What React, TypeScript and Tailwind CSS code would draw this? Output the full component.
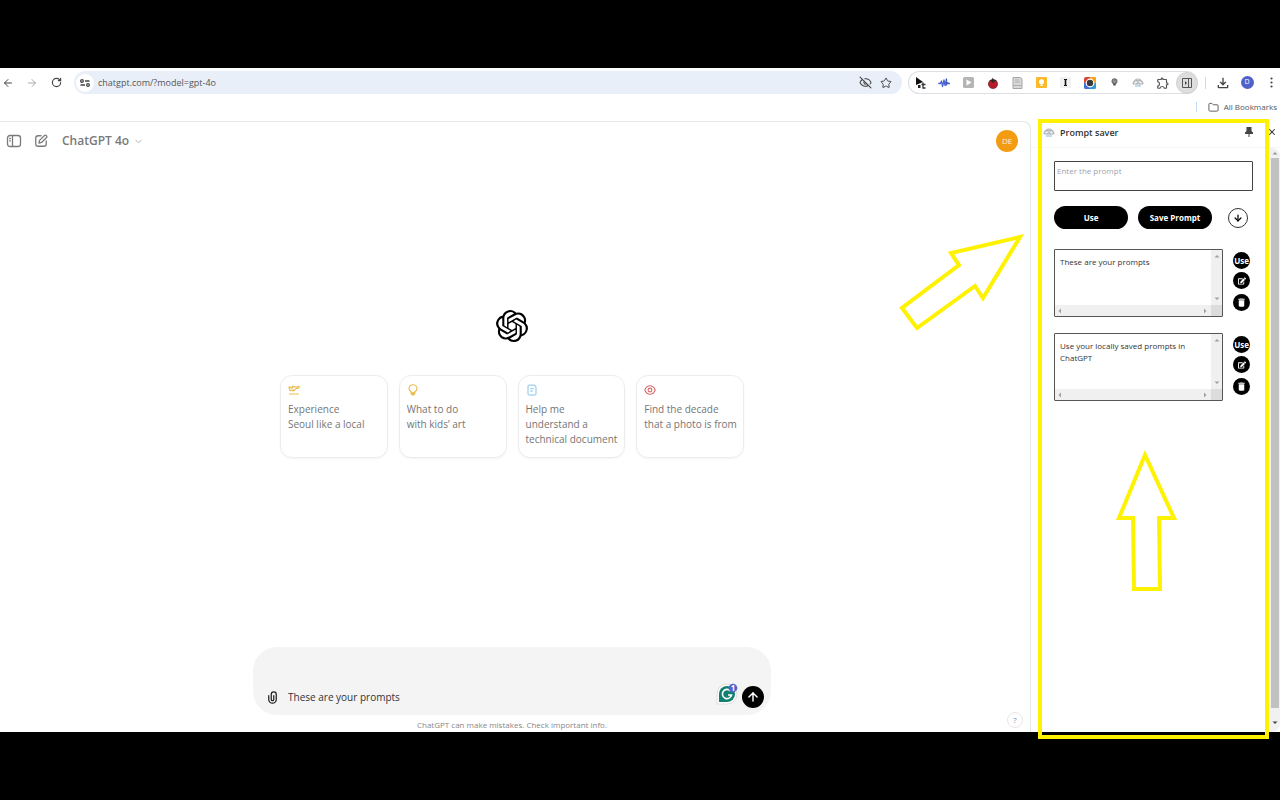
import { useState } from "react";
import type { ReactNode } from "react";
import {
  ArrowDown,
  ArrowLeft,
  ArrowRight,
  ArrowUp,
  ChevronDown,
  EyeOff,
  Folder,
  RotateCw,
  SquarePen,
  Star,
  X,
} from "lucide-react";
import { FaEdit } from "react-icons/fa";
import { MdDelete, MdOutlineExtension, MdOutlineFileDownload } from "react-icons/md";
import { SiOpenai } from "react-icons/si";

const iconButton = "flex w-4 shrink-0 items-center justify-center";
const roundButton =
  "flex size-[17px] items-center justify-center rounded-full bg-black text-[8px] font-bold text-white";

function CloudMark({ size }: { size: number }) {
  return (
    <svg width={size} height={size} viewBox="0 0 24 24" fill="none">
      <path d="M2 14a10 10 0 0 1 20 0z" fill="#f0f2f3" stroke="#989da2" strokeWidth="1.600" />
      <path d="M3 11l5-4 4 4 4-4 5 4M8 7h8M8 14l4-3 4 3" stroke="#989da2" strokeWidth="1.400" />
      <path d="M6 18h12" stroke="#9cc9e6" strokeWidth="2.500" />
    </svg>
  );
}

// Toolbar extension glyphs, in pinned order
const extensions: { name: string; icon: ReactNode }[] = [
  {
    name: "Text flag",
    icon: (
      <svg width="13" height="14" viewBox="0 0 13 14">
        <path d="M2 1l7 5-7 3z" fill="#111" />
        <path d="M4 9h2.500v3H4z" fill="#222" />
        <path d="M9 6.500v5.500h2.500M7.500 8.500h4" fill="none" stroke="#333" strokeWidth="1.300" />
      </svg>
    ),
  },
  {
    name: "Wave",
    icon: (
      <svg width="12" height="12" viewBox="0 0 12 12" fill="none" stroke="#4661cf" strokeWidth="1.300" strokeLinejoin="round" strokeLinecap="round">
        <path d="M.8 6.500h1.500L3.500 4l1 5.500L6 3l1 5.500L8.500 2v6l1-2.500 1 1h1" />
      </svg>
    ),
  },
  {
    name: "Player",
    icon: (
      <svg width="11" height="11" viewBox="0 0 11 11">
        <rect width="11" height="11" rx="1.500" fill="#b5b5b5" />
        <path d="M3.500 2.500l5 3-5 3z" fill="#fff" />
      </svg>
    ),
  },
  {
    name: "Tomato timer",
    icon: (
      <svg width="12" height="12" viewBox="0 0 12 12">
        <circle cx="6" cy="7" r="4.600" fill="#b81c2b" stroke="#5c1a1a" strokeWidth=".6" />
        <path d="M2 3.500L5 3l.5-2.500L7 3l3 .5-2.500 1L6 6 4.500 4.500z" fill="#26301f" />
      </svg>
    ),
  },
  {
    name: "Reader",
    icon: (
      <svg width="11" height="12" viewBox="0 0 11 12">
        <path d="M1 .5h7.500L10 2v9.500H1z" fill="#d8d8d8" stroke="#a5a5a5" />
        <path d="M3 3h4M3 5h5M1 8.500h9" stroke="#b0b0b0" />
      </svg>
    ),
  },
  {
    name: "Keep",
    icon: (
      <svg width="11" height="11" viewBox="0 0 11 11">
        <rect width="11" height="11" rx="1" fill="#fbb92b" />
        <circle cx="5.500" cy="4.700" r="2.500" fill="#fff" />
        <path d="M4.300 7.500h2.400V9H4.300z" fill="#fff" />
      </svg>
    ),
  },
  {
    name: "Instapaper",
    icon: (
      <svg width="11" height="11" viewBox="0 0 11 11">
        <rect width="11" height="11" rx="1" fill="#f1f1f1" />
        <path d="M4 2.500h3M4 8.500h3" stroke="#111" />
        <path d="M5.500 2.500v6" stroke="#111" strokeWidth="1.600" />
      </svg>
    ),
  },
  {
    name: "Lens",
    icon: (
      <svg width="12" height="12" viewBox="0 0 12 12">
        <rect width="12" height="12" rx="2" fill="#dc4437" />
        <path d="M6 0h4a2 2 0 0 1 2 2v4H6z" fill="#f2a51c" />
        <path d="M0 6h6v6H2a2 2 0 0 1-2-2z" fill="#3f6fd8" />
        <path d="M6 6h6v4a2 2 0 0 1-2 2H6z" fill="#2f9ad6" />
        <circle cx="6" cy="6" r="3.800" fill="#3a3a3a" stroke="#fff" strokeWidth="1.200" />
      </svg>
    ),
  },
  {
    name: "Bulb",
    icon: (
      <svg width="7" height="9" viewBox="0 0 7 9">
        <circle cx="3.500" cy="3.300" r="3" fill="#777" />
        <path d="M2 3h3M3.500 3v3" stroke="#aaa" strokeWidth=".8" />
        <path d="M2.300 5.500h2.400v2H2.300z" fill="#444" />
      </svg>
    ),
  },
  { name: "Prompt saver", icon: <CloudMark size={12} /> },
  { name: "Extensions", icon: <MdOutlineExtension size={14} color="#555" /> },
  {
    name: "Side panel",
    icon: (
      <span className="flex size-[22px] shrink-0 items-center justify-center rounded-full border border-[#d0d0d0] bg-[#dedede]">
        <svg width="10" height="10" viewBox="0 0 10 10" fill="none" stroke="#555">
          <path d="M.5.5h9v9h-9zM6.500.5v9" />
          <path d="M3 3l2 2-2 2z" fill="#444" stroke="none" />
        </svg>
      </span>
    ),
  },
];

function Toolbar() {
  const [url, setUrl] = useState("chatgpt.com/?model=gpt-4o");
  return (
    <div className="flex h-[29px] items-center text-[#444]">
      <nav className="flex gap-2">
        <button aria-label="Back" className={iconButton}><ArrowLeft size={12} /></button>
        <button aria-label="Forward" className={`${iconButton} text-[#aaa]`}><ArrowRight size={12} /></button>
        <button aria-label="Reload" className={iconButton}><RotateCw size={11} strokeWidth={2.5} /></button>
      </nav>
      <div className="mr-1.5 ml-2.5 flex h-[23px] flex-1 items-center rounded-full bg-[#e9eff9] pr-2.5 pl-0.5">
        <button aria-label="Site information" className="flex size-[18px] items-center justify-center rounded-full bg-white">
          <svg width="10" height="8" viewBox="0 0 10 8" fill="none" stroke="#444" strokeWidth="1.300">
            <circle cx="2" cy="2" r="1.300" />
            <path d="M5 2h4.500M.5 6H5" />
            <circle cx="8" cy="6" r="1.300" />
          </svg>
        </button>
        <input
          aria-label="Address"
          className="ml-1 min-w-0 flex-1 bg-transparent text-[9px] text-[#555] outline-none"
          value={url}
          onChange={(e) => setUrl(e.target.value)}
        />
        <button aria-label="Tracking blocked" className="mr-2"><EyeOff size={13} /></button>
        <button aria-label="Bookmark this tab"><Star size={12} /></button>
      </div>
      <div className="flex h-[23px] w-[290px] items-center justify-between rounded-full border-y border-l border-[#dcdfe3]">
        {extensions.map((e) => (
          <button key={e.name} aria-label={e.name} className="flex w-[22px] items-center justify-center">
            {e.icon}
          </button>
        ))}
      </div>
      <span className="mr-[9px] ml-[7px] h-3 w-px bg-[#c5dcf5]" />
      <div className="flex items-center gap-2 pr-px">
        <button aria-label="Downloads" className={iconButton}><MdOutlineFileDownload size={16} className="shrink-0" /></button>
        <button aria-label="Profile" className={iconButton}>
          <span className="flex size-[13px] items-center justify-center rounded-full bg-[#4f62cb] text-[7px] text-white">D</span>
        </button>
        <button aria-label="Menu" className={iconButton}>
          <svg width="3" height="11" viewBox="0 0 3 11" fill="#444">
            <circle cx="1.500" cy="1.500" r="1.100" />
            <circle cx="1.500" cy="5.500" r="1.100" />
            <circle cx="1.500" cy="9.500" r="1.100" />
          </svg>
        </button>
      </div>
    </div>
  );
}

const suggestions: { text: string; icon: ReactNode }[] = [
  {
    text: "Experience\nSeoul like a local",
    icon: (
      <svg width="12" height="12" viewBox="0 0 24 24" fill="none" stroke="#eabd4e" strokeWidth="2.400" strokeLinejoin="round" strokeLinecap="round">
        <path d="M2 6l2 0 3 2.500 3-1L8 5l3-.5 5 2 3.500-1.500c3-.8 4 1.500 1.500 2.700L15 10l-2 3-3 1 .5-2.500L7 13c-2 .5-3.500-.5-4-2zM3 20h18" />
      </svg>
    ),
  },
  {
    text: "What to do\nwith kids’ art",
    icon: (
      <svg width="12" height="12" viewBox="0 0 24 24" fill="none" stroke="#eabd4e" strokeWidth="2.400">
        <path d="M8.500 18v-2.500C5.500 14 4 12 4 9.500a8 8 0 0 1 16 0c0 2.500-1.500 4.500-4.500 6V18z" />
        <path d="M7.500 16.500h9V20l-2.500 3h-4l-2.500-3z" fill="#eabd4e" stroke="none" />
      </svg>
    ),
  },
  {
    text: "Help me\nunderstand a\ntechnical document",
    icon: (
      <svg width="12" height="12" viewBox="0 0 24 24" fill="none" stroke="#9fd0ea" strokeWidth="2.500" strokeLinejoin="round">
        <path d="M7 2h9l4 4v13a3 3 0 0 1-3 3H7a3 3 0 0 1-3-3V5a3 3 0 0 1 3-3zM8.500 9h7M8.500 14h5" />
      </svg>
    ),
  },
  {
    text: "Find the decade\nthat a photo is from",
    icon: (
      <svg width="12" height="12" viewBox="0 0 24 24" fill="none" stroke="#d9696c" strokeWidth="2.200">
        <path d="M1.500 12C4 6 8 3.500 12 3.500S20 6 22.500 12C20 18 16 20.500 12 20.500S4 18 1.500 12z" />
        <circle cx="12" cy="12" r="3.800" />
      </svg>
    ),
  },
];

function Chat() {
  const [message, setMessage] = useState("These are your prompts");
  return (
    <main className="relative flex min-w-0 flex-1 flex-col rounded-tr-lg border-t border-r border-[#e6e6e6]">
      <header className="flex h-[38px] items-center pr-3 pl-1.5 text-[#7a7a7a]">
        <button aria-label="Toggle sidebar">
          <svg width="16" height="16" viewBox="0 0 16 16" fill="none" stroke="currentColor" strokeWidth="1.300">
            <rect x="1.500" y="2.500" width="13" height="11" rx="2.500" />
            <path d="M6.500 2.500v11M3.200 5.500h1.600M3.200 7.800h1.600" />
          </svg>
        </button>
        <button aria-label="New chat" className="ml-3">
          <svg width="14" height="14" viewBox="0 0 24 24" fill="none" stroke="currentColor" strokeWidth="2.200" strokeLinejoin="round" strokeLinecap="round">
            <path d="M12 3H7a4 4 0 0 0-4 4v10a4 4 0 0 0 4 4h10a4 4 0 0 0 4-4v-5" />
            <path d="M18 2.500a2.500 2.500 0 0 1 3.500 3.500L13 14.500 8.500 15.500l1-4.500z" />
          </svg>
        </button>
        <button className="ml-3.5 flex items-center gap-1 text-xs font-semibold">
          ChatGPT 4o
          <ChevronDown size={11} className="text-[#aaa]" />
        </button>
        <button className="ml-auto size-[22px] rounded-full bg-[#f39c12] text-[8px] text-[#fff3d6]">DE</button>
      </header>
      <div className="flex flex-1 flex-col items-center justify-center pr-1.5 pb-10">
        <SiOpenai size={32} color="#000" />
        <div className="mt-[33px] grid w-full max-w-[464px] grid-cols-4 gap-[11px]">
          {suggestions.map((s) => (
            <button
              key={s.text}
              className="flex min-h-[83px] flex-col items-start rounded-xl border border-[#ececec] px-[7px] py-2 text-left shadow-xs"
            >
              {s.icon}
              <span className="mt-1.5 text-[10px] leading-[15px] whitespace-pre text-[#757575]">{s.text}</span>
            </button>
          ))}
        </div>
      </div>
      <div className="flex flex-col items-center pr-1.5">
        <form
          className="flex h-[68px] w-full max-w-[518px] items-end rounded-[24px] bg-[#f4f4f4] pr-[7px] pb-[7px] pl-3"
          onSubmit={(e) => e.preventDefault()}
        >
          <button type="button" aria-label="Attach file" className="flex h-[22px] items-center">
            <svg width="15" height="15" viewBox="0 0 24 24" fill="#222">
              <path d="M9 7a5 5 0 0 1 10 0v8a7 7 0 1 1-14 0V9a1 1 0 0 1 2 0v6a5 5 0 0 0 10 0V7a3 3 0 1 0-6 0v8a1 1 0 1 0 2 0V9a1 1 0 1 1 2 0v6a3 3 0 1 1-6 0z" />
            </svg>
          </button>
          <input
            aria-label="Message ChatGPT"
            className="ml-2 h-[22px] min-w-0 flex-1 bg-transparent text-[10px] text-[#333] outline-none"
            value={message}
            onChange={(e) => setMessage(e.target.value)}
          />
          <button type="button" aria-label="Grammarly, 1 suggestion" className="mr-1 mb-[3px]">
            <svg width="22" height="22" viewBox="0 0 22 22">
              <path d="M1 21V11a10 10 0 1 1 10 10z" fill="#fff" stroke="#dedede" />
              <path d="M3 19v-8a8 8 0 1 1 8 8z" fill="#128070" />
              <path d="M14.500 8a4.600 4.600 0 1 0 1 4H12" fill="none" stroke="#fff" strokeWidth="1.600" />
              <circle cx="17" cy="5" r="4.300" fill="#5661cf" />
              <text x="17" y="8" textAnchor="middle" fontSize="8" fontWeight="bold" fill="#fff">1</text>
            </svg>
          </button>
          <button aria-label="Send" className="flex size-[22px] items-center justify-center rounded-full bg-black text-white">
            <ArrowUp size={14} strokeWidth={2.5} />
          </button>
        </form>
        <p className="pt-1 pb-px text-[8px] leading-3 text-[#888]">
          ChatGPT can make mistakes. Check important info.
        </p>
      </div>
      <button
        aria-label="Help"
        className="absolute right-[7px] bottom-1 size-4 rounded-full border border-[#e8e8e8] text-[8px] leading-none text-[#888]"
      >
        ?
      </button>
      <svg className="absolute top-[107px] right-0" width="134" height="106" viewBox="0 0 134 106" fill="none" stroke="#fff200" strokeWidth="4">
        <path d="M124 8L55 24l8 12L6 79l15 20 58-42 8 12z" />
      </svg>
    </main>
  );
}

const arrow = "size-[10px] shrink-0";

function ScrollArrow({ d, color = "#a0a0a0" }: { d: string; color?: string }) {
  return (
    <svg className={arrow} viewBox="0 0 10 10" fill={color}>
      <path d={d} />
    </svg>
  );
}

const UP = "M2.500 6.500h5L5 4z";
const DOWN = "M2.500 3.500h5L5 6z";
const LEFT = "M6 2.500v5L3.500 5z";
const RIGHT = "M4 2.500v5L6.500 5z";

function SavedPrompt({ text }: { text: string }) {
  const [value, setValue] = useState(text);
  return (
    <li className="flex gap-2.5 pr-[3px]">
      <div className="grid h-[68px] min-w-0 flex-1 grid-cols-[1fr_11px] grid-rows-[1fr_11px] rounded-[1px] border border-[#555]">
        <textarea
          aria-label="Saved prompt"
          className="block resize-none overflow-hidden px-[5px] py-1.5 text-[8px] leading-3 text-[#333] outline-none"
          value={value}
          onChange={(e) => setValue(e.target.value)}
        />
        <div className="flex flex-col items-center justify-between bg-[#f0f0f0] py-px">
          <ScrollArrow d={UP} />
          <ScrollArrow d={DOWN} />
        </div>
        <div className="flex items-center justify-between bg-[#f0f0f0] pr-px">
          <ScrollArrow d={LEFT} />
          <ScrollArrow d={RIGHT} />
        </div>
        <div className="bg-[#dcdcdc]" />
      </div>
      <div className="flex flex-col pt-[3px]">
        <button className={roundButton}>Use</button>
        <button aria-label="Edit prompt" className={`${roundButton} mt-[3px]`}><FaEdit size={8} /></button>
        <button aria-label="Delete prompt" className={`${roundButton} mt-[5px]`}><MdDelete size={11} /></button>
      </div>
    </li>
  );
}

function SidePanel() {
  const [draft, setDraft] = useState("");
  return (
    <aside className="relative flex w-[249px] shrink-0 flex-col">
      <header className="flex h-[27px] items-center border-b border-[#f6f6f6] pr-[3px] pl-3 text-[#333]">
        <span className="pb-0.5"><CloudMark size={12} /></span>
        <h2 className="ml-[5px] pb-[3px] text-[9px] leading-4 font-semibold">Prompt saver</h2>
        <button aria-label="Pin panel" className="ml-auto pb-1">
          <svg width="8" height="10" viewBox="0 0 8 10" fill="#444">
            <path d="M1.500 0h5v4L8 5.500V7H4.500v3h-1V7H0V5.500L1.500 4z" />
          </svg>
        </button>
        <button aria-label="Close panel" className="ml-3.5 pb-1"><X size={10} strokeWidth={2.5} /></button>
      </header>
      <div className="flex flex-1">
        <div className="min-w-0 flex-1 pt-[13px] pr-[17px] pl-[23px]">
          <textarea
            aria-label="Prompt"
            className="block h-[30px] w-full resize-none rounded-[1px] border border-[#444] px-0.5 py-[3px] text-[8px] leading-3 outline-none placeholder:text-[#9ca3af]"
            placeholder="Enter the prompt"
            value={draft}
            onChange={(e) => setDraft(e.target.value)}
          />
          <div className="mt-[15px] flex items-center gap-2.5 pr-[5px] text-[8px] font-bold text-white">
            <button className="h-[23px] w-[74px] rounded-full bg-black">Use</button>
            <button className="h-[23px] w-[74px] rounded-full bg-black">Save Prompt</button>
            <button
              aria-label="Download prompts"
              className="ml-auto flex size-5 items-center justify-center rounded-full border border-[#333] text-black"
            >
              <ArrowDown size={10} strokeWidth={3} />
            </button>
          </div>
          <ul className="mt-5 flex flex-col gap-4">
            <SavedPrompt text="These are your prompts" />
            <SavedPrompt text="Use your locally saved prompts in ChatGPT" />
          </ul>
        </div>
        <div className="flex w-2.5 flex-col rounded-tr-lg rounded-br-lg bg-[#f1f1f1] pb-1">
          <ScrollArrow d={UP} color="#999" />
          <div className="mx-px mb-2.5 flex-1 bg-[#c1c1c1]" />
          <ScrollArrow d={DOWN} color="#444" />
        </div>
      </div>
      <svg className="absolute top-[326px] left-[82px]" width="64" height="148" viewBox="0 0 64 148" fill="none" stroke="#fff200" strokeWidth="4">
        <path d="M32 8L6 71h14l1 71h26l-1-71h15z" />
      </svg>
      <div className="pointer-events-none absolute -top-0.5 right-[11px] -bottom-[7px] left-[7px] border-4 border-[#fff200]" />
    </aside>
  );
}

export default function App() {
  return (
    <div className="flex min-h-screen flex-col bg-black py-[68px] font-['Open_Sans','Noto_Sans',sans-serif]">
      <div className="flex flex-1 flex-col bg-white">
        <Toolbar />
        <div className="flex h-6 items-center justify-end gap-[5px] pr-[3px] pb-1 text-[8px] text-[#555]">
          <span className="mr-1.5 h-2.5 w-px bg-[#c5dcf5]" />
          <a href="#bookmarks" className="flex items-center gap-[5px]">
            <Folder size={11} />
            All Bookmarks
          </a>
        </div>
        <div className="flex flex-1">
          <Chat />
          <SidePanel />
        </div>
      </div>
    </div>
  );
}
